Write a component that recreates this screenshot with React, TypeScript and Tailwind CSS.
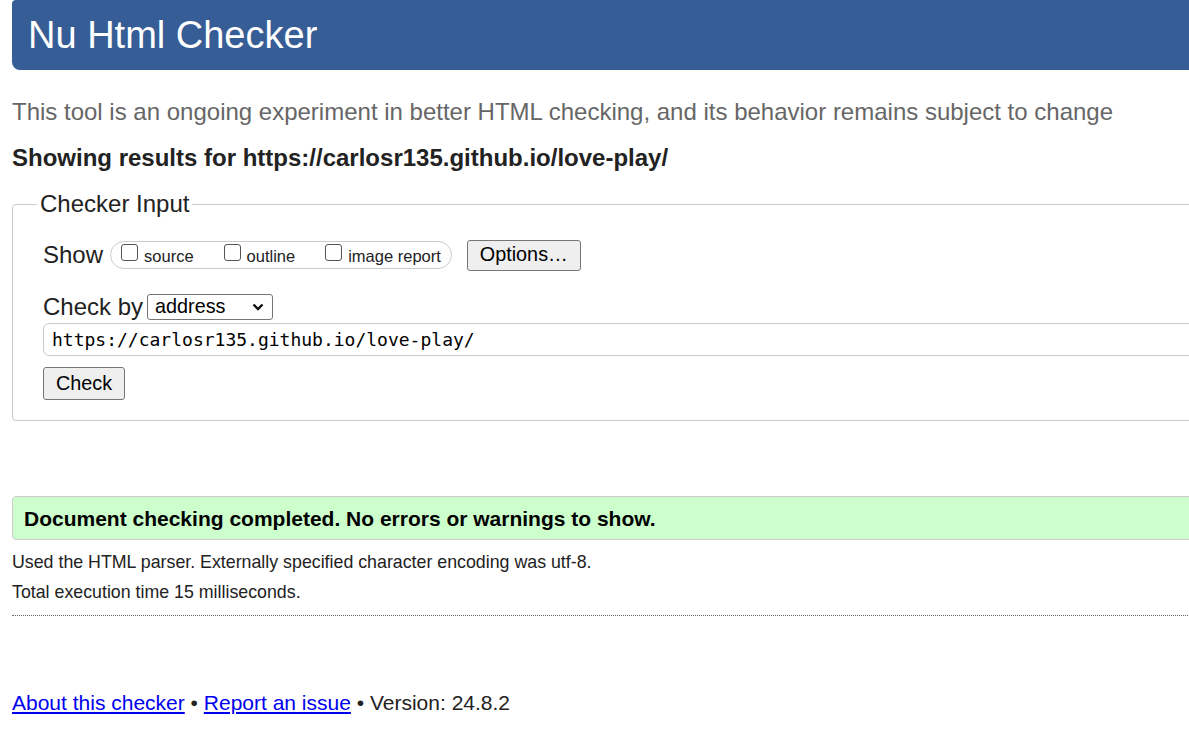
import { useState } from "react";

const CHECK_URL = "https://carlosr135.github.io/love-play/";

// 체크박스 항목
const SHOW_OPTIONS = [
  { id: "source", label: "source", gap: "mr-[30px]" },
  { id: "outline", label: "outline", gap: "mr-[30px]" },
  { id: "image-report", label: "image report", gap: "" },
];

function Checkbox({ checked, onChange }: { checked: boolean; onChange: () => void }) {
  return (
    <span
      onClick={onChange}
      className="mt-[1px] mr-[6px] inline-block h-[17px] w-[17px] shrink-0 rounded-[3px] border border-[#555] bg-white"
    >
      {checked && (
        <svg viewBox="0 0 16 16" className="h-full w-full">
          <path d="M3 8l3 3 7-7" fill="none" stroke="#222" strokeWidth="2" />
        </svg>
      )}
    </span>
  );
}

export default function App() {
  const [checked, setChecked] = useState<Record<string, boolean>>({});
  const [url, setUrl] = useState(CHECK_URL);

  // 공통 버튼 스타일
  const btnBase =
    "rounded-[3px] border border-[#767676] bg-[#efefef] px-[12px] text-[19.8px] leading-none text-black";

  return (
    <div className="min-h-screen w-full overflow-hidden bg-white font-['Liberation_Sans',Arial,sans-serif] text-[#222]">
      <div className="w-[1400px] pl-3">
        <header className="flex h-[70px] items-center rounded-b-[8px] rounded-tl-[4px] bg-[#365d95] pl-[16px]">
          <h1 className="text-[38px] leading-none font-normal text-white">Nu Html Checker</h1>
        </header>

        <p className="mt-[24px] h-[36px] text-[24px] leading-[36px] text-[#666]">
          This tool is an ongoing experiment in better HTML checking, and its behavior remains
          subject to change
        </p>

        <p className="mt-[10px] h-[36px] text-[24px] leading-[36px] font-bold">
          Showing results for {CHECK_URL}
        </p>

        <fieldset className="mt-[13px] rounded-[4px] border border-[#ccc] pr-0 pb-[20px] pl-[30px]">
          <legend className="-ml-[6px] px-[3px] text-[24px] leading-[30px]">Checker Input</legend>

          {/* Show 행 */}
          <div className="mt-[20px] flex h-[32px] items-center">
            <span className="mr-[7px] text-[24px] leading-none">Show</span>
            <div className="flex h-[28px] items-start rounded-full border border-[#ccc] pt-[1px] pr-[10px] pl-[10px]">
              {SHOW_OPTIONS.map((opt) => (
                <label
                  key={opt.id}
                  className={`flex items-start text-[16.5px] leading-[24px] ${opt.gap}`}
                >
                  <Checkbox
                    checked={!!checked[opt.id]}
                    onChange={() => setChecked((prev) => ({ ...prev, [opt.id]: !prev[opt.id] }))}
                  />
                  <span className="mt-[1px]">{opt.label}</span>
                </label>
              ))}
            </div>
            <button className={`ml-[15px] h-[31px] ${btnBase}`}>Options…</button>
          </div>

          {/* Check by 행 */}
          <div className="mt-[23px] flex h-[26px] items-center">
            <span className="mr-[4px] text-[24px] leading-none">Check by</span>
            <div className="flex h-[26px] w-[126px] items-center justify-between rounded-[3px] border border-[#767676] bg-white pr-[8px] pl-[7px]">
              <span className="text-[19.8px] leading-none text-black">address</span>
              <svg viewBox="0 0 12 8" className="h-[8px] w-[12px]">
                <path d="M1.5 1.5l4.5 4.5 4.5-4.5" fill="none" stroke="#111" strokeWidth="2.4" />
              </svg>
            </div>
          </div>

          <input
            value={url}
            onChange={(e) => setUrl(e.target.value)}
            className="mt-[3px] block h-[33px] w-full rounded-[6px] border border-[#ccc] px-[8px] font-['DejaVu_Sans_Mono',monospace] text-[18px] text-black outline-none"
          />

          <button className={`mt-[11px] h-[33px] px-[12px] ${btnBase}`}>Check</button>
        </fieldset>

        {/* 결과 메시지 */}
        <div className="mt-[75px] flex h-[44px] items-center rounded-[4px] border border-[#ccc] bg-[#ccffcc] pl-[11px]">
          <p className="text-[21px] leading-none font-bold text-black">
            Document checking completed. No errors or warnings to show.
          </p>
        </div>

        <p className="mt-[7px] text-[17.8px] leading-[30px]">
          Used the HTML parser. Externally specified character encoding was utf-8.
        </p>
        <p className="text-[17.8px] leading-[30px]">Total execution time 15 milliseconds.</p>
        <hr className="mt-[8px] border-0 border-t border-dotted border-[#666]" />

        <footer className="mt-[75px] text-[21px] leading-[24px]">
          <a href="#" className="text-[#0000ee] underline">
            About this checker
          </a>{" "}
          •{" "}
          <a href="#" className="text-[#0000ee] underline">
            Report an issue
          </a>{" "}
          • Version: 24.8.2
        </footer>
      </div>
    </div>
  );
}
